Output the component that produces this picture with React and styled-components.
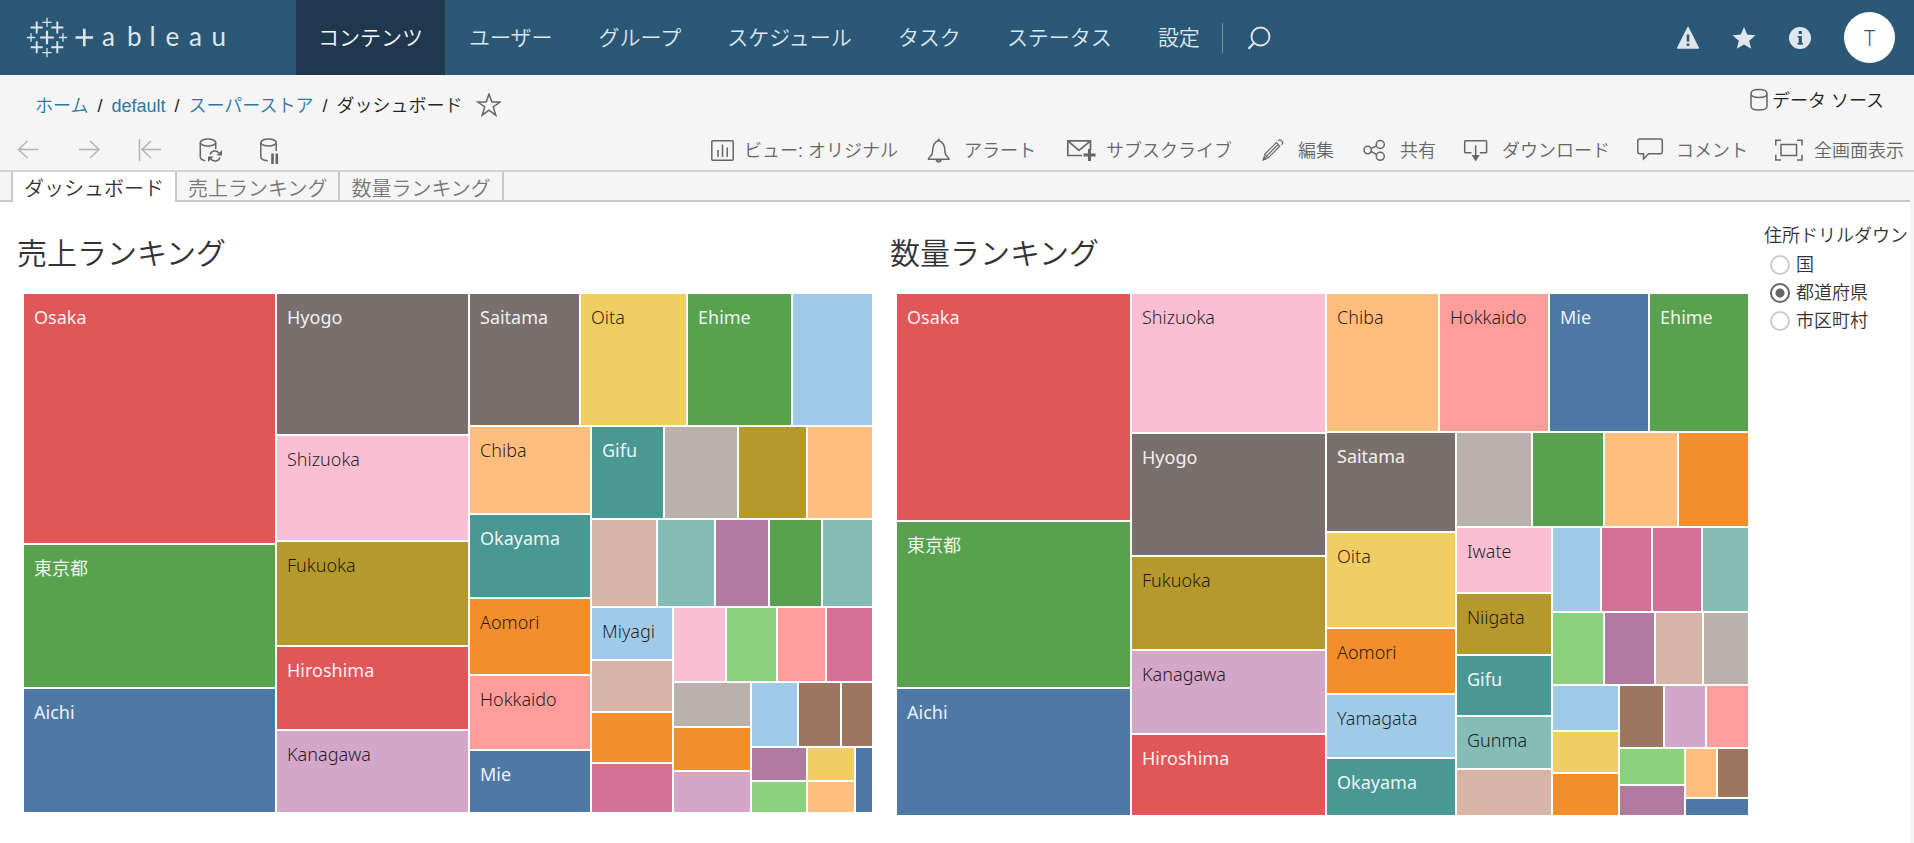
import React, { useState } from "react";
import styled, { createGlobalStyle } from "styled-components";

const GlobalStyle = createGlobalStyle`
  * {
    box-sizing: border-box;
  }
  body {
    margin: 0;
    background-color: #f5f5f5;
    color: #333;
    font-family: "Liberation Sans", "Noto Sans CJK JP", sans-serif;
    font-weight: 350;
    font-size: 18px;
    line-height: 24px;
  }
  a {
    text-decoration: none;
  }
  h2, p {
    margin: 0;
  }
`;

const Page = styled.div`
  display: flex;
  flex-direction: column;
  height: 100vh;
  min-height: 640px;
`;

/* ---------- header ---------- */

const Header = styled.header`
  display: flex;
  align-items: center;
  height: 75px;
  flex-shrink: 0;
  background-color: #2a5876;
  color: #dfe6ec;
`;
const LogoLink = styled.a`
  display: flex;
  width: 296px;
  padding-left: 24px;
  flex-shrink: 0;
`;
const MainNav = styled.nav`
  display: flex;
  align-self: stretch;
  gap: 2px;
`;
const NavLink = styled.a`
  display: flex;
  align-items: center;
  padding: 0 22px;
  font-size: 21px;
  white-space: nowrap;
  color: ${(props) => (props.$active ? "#fff" : "#dfe6ec")};
  background-color: ${(props) => (props.$active ? "#1f384e" : "transparent")};
`;
const Divider = styled.span`
  width: 1px;
  height: 30px;
  background-color: #6f8fa5;
`;
const IconButton = styled.button`
  display: flex;
  padding: 0;
  border: none;
  background: none;
  color: inherit;
  cursor: pointer;
`;
const SearchButton = styled(IconButton)`
  margin-left: 24px;
`;
const HeaderActions = styled.div`
  display: flex;
  align-items: center;
  gap: 32px;
  margin-left: auto;
  padding-right: 19px;
`;
const Avatar = styled.button`
  width: 51px;
  height: 51px;
  padding: 0;
  border: none;
  border-radius: 50%;
  background-color: #fff;
  color: #2a5876;
  font-family: "Noto Sans", sans-serif;
  font-weight: 300;
  font-size: 21px;
`;

/* ---------- breadcrumb and toolbar ---------- */

const CrumbRow = styled.div`
  display: flex;
  justify-content: space-between;
  align-items: center;
  height: 55px;
  flex-shrink: 0;
  padding: 6px 30px 0 35px;
`;
const Crumbs = styled.nav`
  display: flex;
  align-items: center;
  gap: 9px;
  color: #222;
  a {
    color: #2b7a9e;
  }
`;
const SourceLink = styled.a`
  display: flex;
  align-items: center;
  align-self: flex-start;
  gap: 4px;
  height: 40px;
  color: #222;
`;
const Toolbar = styled.div`
  display: flex;
  align-items: center;
  justify-content: space-between;
  height: 42px;
  flex-shrink: 0;
  padding: 0 10px 0 12px;
  border-bottom: 2px solid #d4d4d4;
`;
const History = styled.div`
  display: flex;
  gap: 29px;
  color: #666;
`;
const HistoryButton = styled(IconButton)`
  &:disabled {
    color: #b5b5b5;
  }
`;
const Actions = styled.div`
  display: flex;
  gap: 24px;
`;
const ActionButton = styled(IconButton)`
  align-items: center;
  gap: 10px;
  color: #666;
  font: inherit;
  white-space: nowrap;
`;
const ActionText = styled.span`
  padding-top: 2px;
`;

/* ---------- sheet tabs ---------- */

const TabBar = styled.nav`
  display: flex;
  height: 30px;
  flex-shrink: 0;
  margin-right: 4px;
  padding-left: 11px;
  box-shadow: inset 0 -2px #c8c8c8;
`;
const Tab = styled.a`
  display: flex;
  align-items: center;
  padding: 3px 11px 0;
  font-size: 20px;
  white-space: nowrap;
  color: ${(props) => (props.$active ? "#333" : "#777")};
  background-color: ${(props) => (props.$active ? "#fff" : "transparent")};
  border-right: 2px solid #c8c8c8;
  &:first-child {
    border-left: 2px solid #c8c8c8;
  }
`;

/* ---------- dashboard ---------- */

const Dashboard = styled.main`
  display: flex;
  flex: 1;
  min-height: 0;
  margin-right: 4px;
  padding-left: 17px;
  background-color: #fff;
`;
const Sheets = styled.div`
  display: flex;
  flex: 1;
  gap: 18px;
`;
const Sheet = styled.section`
  display: flex;
  flex-direction: column;
  flex: ${(props) => props.$grow} 1 0px;
  padding-bottom: ${(props) => props.$bottom}px;
`;
const SheetTitle = styled.h2`
  height: 92px;
  padding-top: 32px;
  font-size: 30px;
  font-weight: 350;
  line-height: 40px;
`;
const Treemap = styled.div`
  display: flex;
  flex: 1;
  min-height: 0;
  margin-left: 7px;
`;
const Group = styled.div`
  display: flex;
  flex-direction: ${(props) => props.$dir};
  flex: ${(props) => props.$size} 1 0px;
  min-width: 0;
  min-height: 0;
  gap: 2px;
`;
const Cell = styled.div`
  flex: ${(props) => props.$size} 1 0px;
  min-width: 0;
  min-height: 0;
  overflow: hidden;
  background-color: ${(props) => props.$color};
`;
const CellLabel = styled.span`
  display: block;
  padding: 11px 0 0 10px;
  font-family: "Noto Sans", "Noto Sans CJK JP", sans-serif;
  font-weight: ${(props) => (props.$light ? 400 : 300)};
  color: ${(props) => (props.$light ? "rgba(255, 255, 255, 0.92)" : "rgba(0, 0, 0, 0.85)")};
  white-space: nowrap;
`;
const Filter = styled.fieldset`
  width: 162px;
  flex-shrink: 0;
  margin: 0;
  padding: 22px 0 0 16px;
  border: none;
`;
const FilterTitle = styled.legend`
  float: left;
  width: 100%;
  padding: 0;
  margin-bottom: 3px;
  white-space: nowrap;
`;
const RadioLabel = styled.label`
  display: flex;
  align-items: center;
  clear: both;
  gap: 6px;
  height: 28px;
  padding-left: 6px;
`;
const Radio = styled.input`
  appearance: none;
  width: 20px;
  height: 20px;
  margin: 0;
  border: 2px solid #ccc;
  border-radius: 50%;
  &:checked {
    border-color: #666;
    background: radial-gradient(circle, #666 0 4px, transparent 5px);
  }
`;

const palette = {
  red: "#e15759",
  green: "#59a14f",
  blue: "#4e79a7",
  gray: "#79706e",
  silver: "#bab0ac",
  pink: "#fabfd2",
  olive: "#b6992d",
  mauve: "#d4a6c8",
  orange: "#f28e2b",
  peach: "#ffbe7d",
  yellow: "#f1ce63",
  teal: "#499894",
  aqua: "#86bcb6",
  salmon: "#ff9d9a",
  sky: "#a0cbe8",
  tan: "#d7b5a6",
  purple: "#b07aa1",
  lime: "#8cd17d",
  rose: "#d37295",
  brown: "#9d7660",
};
const lightLabelOn = ["red", "green", "blue", "gray", "teal"];

const row = (size, ...children) => ({ dir: "row", size, children });
const col = (size, ...children) => ({ dir: "column", size, children });
const cell = (size, color, name) => ({ size, color, name });

const salesTree = row(
  1,
  col(251, cell(249, "red", "Osaka"), cell(142, "green", "東京都"), cell(123, "blue", "Aichi")),
  col(
    191,
    cell(140, "gray", "Hyogo"),
    cell(104, "pink", "Shizuoka"),
    cell(103, "olive", "Fukuoka"),
    cell(82, "red", "Hiroshima"),
    cell(81, "mauve", "Kanagawa")
  ),
  col(
    402,
    row(
      131,
      cell(109, "gray", "Saitama"),
      cell(105, "yellow", "Oita"),
      cell(103, "green", "Ehime"),
      cell(79, "sky")
    ),
    row(
      385,
      col(
        120,
        cell(86, "peach", "Chiba"),
        cell(82, "teal", "Okayama"),
        cell(75, "orange", "Aomori"),
        cell(73, "salmon", "Hokkaido"),
        cell(61, "blue", "Mie")
      ),
      col(
        280,
        row(91, cell(71, "teal", "Gifu"), cell(72, "silver"), cell(67, "olive"), cell(64, "peach")),
        row(
          86,
          cell(64, "tan"),
          cell(56, "aqua"),
          cell(52, "purple"),
          cell(51, "green"),
          cell(49, "aqua")
        ),
        row(
          204,
          col(80, cell(51, "sky", "Miyagi"), cell(50, "tan"), cell(49, "orange"), cell(48, "rose")),
          col(
            198,
            row(73, cell(51, "pink"), cell(49, "lime"), cell(47, "salmon"), cell(45, "rose")),
            row(
              129,
              col(76, cell(43, "silver"), cell(42, "orange"), cell(40, "mauve")),
              col(
                120,
                row(63, cell(45, "sky"), cell(41, "brown"), cell(30, "brown")),
                row(
                  64,
                  col(54, cell(32, "purple"), cell(30, "lime")),
                  col(46, cell(32, "yellow"), cell(30, "peach")),
                  cell(16, "blue")
                )
              )
            )
          )
        )
      )
    )
  )
);

const quantityTree = row(
  1,
  col(233, cell(226, "red", "Osaka"), cell(165, "green", "東京都"), cell(126, "blue", "Aichi")),
  col(
    193,
    cell(138, "pink", "Shizuoka"),
    cell(121, "gray", "Hyogo"),
    cell(92, "olive", "Fukuoka"),
    cell(82, "mauve", "Kanagawa"),
    cell(80, "red", "Hiroshima")
  ),
  col(
    421,
    row(
      137,
      cell(111, "peach", "Chiba"),
      cell(108, "salmon", "Hokkaido"),
      cell(98, "blue", "Mie"),
      cell(98, "green", "Ehime")
    ),
    row(
      382,
      col(
        128,
        cell(98, "gray", "Saitama"),
        cell(94, "yellow", "Oita"),
        cell(64, "orange", "Aomori"),
        cell(62, "sky", "Yamagata"),
        cell(56, "teal", "Okayama")
      ),
      col(
        291,
        row(93, cell(74, "silver"), cell(70, "green"), cell(72, "peach"), cell(69, "orange")),
        row(
          287,
          col(
            94,
            cell(64, "pink", "Iwate"),
            cell(60, "olive", "Niigata"),
            cell(59, "teal", "Gifu"),
            cell(51, "aqua", "Gunma"),
            cell(45, "tan")
          ),
          col(
            195,
            row(83, cell(47, "sky"), cell(49, "rose"), cell(48, "rose"), cell(45, "aqua")),
            row(71, cell(50, "lime"), cell(49, "purple"), cell(46, "tan"), cell(44, "silver")),
            row(
              129,
              col(65, cell(44, "sky"), cell(40, "yellow"), cell(41, "orange")),
              col(
                128,
                row(61, cell(43, "brown"), cell(40, "mauve"), cell(41, "salmon")),
                row(
                  66,
                  col(64, cell(35, "lime"), cell(29, "purple")),
                  col(62, row(48, cell(30, "peach"), cell(30, "brown")), cell(16, "blue"))
                )
              )
            )
          )
        )
      )
    )
  )
);

const TreeNode = ({ node }) => {
  if (node.children) {
    return (
      <Group $dir={node.dir} $size={node.size}>
        {node.children.map((child, i) => (
          <TreeNode key={i} node={child} />
        ))}
      </Group>
    );
  }
  return (
    <Cell $size={node.size} $color={palette[node.color]}>
      {node.name && <CellLabel $light={lightLabelOn.includes(node.color)}>{node.name}</CellLabel>}
    </Cell>
  );
};

/* ---------- icons ---------- */

const Icon = ({ width = 32, height = 28, children }) => (
  <svg
    width={width}
    height={height}
    viewBox={`0 0 ${width} ${height}`}
    fill="none"
    stroke="currentColor"
    strokeWidth="1.5"
    aria-hidden="true"
  >
    {children}
  </svg>
);

const plus = (x, y, r) => `M${x - r} ${y}H${x + r}M${x} ${y - r}V${y + r}`;

const Logo = () => (
  <svg width="210" height="48" viewBox="0 0 210 48" role="img" aria-label="Tableau">
    <g fill="none" stroke="#dfe6ec">
      <path strokeWidth="2.2" d={plus(23, 23.5, 6.8)} />
      <path
        strokeWidth="1.9"
        d={plus(12.7, 13.5, 6) + plus(33.3, 13.5, 6) + plus(12.7, 33.2, 6) + plus(33.3, 33.2, 6)}
      />
      <path
        strokeWidth="1.3"
        d={plus(23, 8.4, 4.6) + plus(7, 23.5, 4.2) + plus(39, 23.5, 4.2) + plus(23, 38.6, 4.6)}
      />
      <path strokeWidth="2.6" d={plus(60.3, 23.5, 8.8)} />
    </g>
    <text
      x="78 103 125.5 141.5 165 187.5"
      y="32"
      fill="#dfe6ec"
      fontFamily="Lato, sans-serif"
      fontWeight="400"
      fontSize="26"
    >
      ableau
    </text>
  </svg>
);

const icons = {
  back: <path d="M26.5 13.5H6.5M15.5 5l-9 8.5 9 8.5" />,
  forward: <path d="M6 13.5H26M17 5l9 8.5-9 8.5" />,
  reset: <path d="M5.5 3V25M27 13.5H8M17 5l-9 8.5 9 8.5" />,
  refresh: (
    <>
      <ellipse cx="13" cy="6.5" rx="7.7" ry="3.6" />
      <path d="M5.3 6.5V21c0 2 2 3.2 5 3.7M20.7 6.5V13" />
      <path d="M15 18.5a5.2 5.2 0 0 1 9-1.5M25 21.5a5.2 5.2 0 0 1-9 1.5" />
      <path d="M27 14v5.5h-5.500zM13 26v-5.5h5.500z" fill="currentColor" stroke="none" />
    </>
  ),
  pause: (
    <>
      <ellipse cx="12.5" cy="6.5" rx="7.7" ry="3.6" />
      <path d="M4.8 6.5V21c0 2 2 3.2 7 3.7M20.2 6.5V15" />
      <path d="M16.5 17.5V28M20.8 17.5V28" strokeWidth="2.6" />
    </>
  ),
  view: (
    <>
      <rect x="9.8" y="4.8" width="21.4" height="19.4" rx="1" />
      <path d="M16 14v7M20.5 8.500V21M25.2 11.500V21" />
    </>
  ),
  alert: (
    <>
      <path d="M6.5 23.3h20.500c0-2.500-4-2.800-4-7.300 0-6-1.500-10-6.300-11.500-4.700 1.500-6.200 5.500-6.200 11.500 0 4.500-4 4.800-4 7.300z" />
      <path d="M16.7 4.5V2.8M14.5 24c.4 2.2 4 2.2 4.400 0" strokeWidth="2" />
    </>
  ),
  subscribe: (
    <>
      <path d="M22 19.5H7.8V4.8h22.700V14M7.8 4.8L19 14.5 30.5 4.8" strokeWidth="1.7" />
      <path d={plus(29.5, 19, 6)} strokeWidth="3" />
    </>
  ),
  edit: (
    <>
      <path
        d="M8.5 18.5L20.3 6.7l3.500 3.500L12 22zM22 5.2l1-1c.6-.5 1.200-.5 1.800 0l1.600 1.600c.5.6.5 1.2 0 1.800l-1 1M10.8 19.8L22 8.6"
        strokeWidth="1.2"
      />
      <path d="M8 19.5L6 25l5.500-2z" fill="currentColor" stroke="none" />
    </>
  ),
  share: (
    <>
      <circle cx="9.7" cy="14" r="3.7" />
      <circle cx="22.3" cy="8.5" r="4" />
      <circle cx="22.3" cy="20.3" r="4" />
      <path d="M13.2 12.4l5.400-2.400M13.2 15.6l5.400 3" />
    </>
  ),
  download: (
    <>
      <path d="M11.5 16.8H5.5c-.5 0-.8-.3-.8-.8V5.5c0-.5.3-.8.8-.8h20.300c.5 0 .8.3.8.8V16c0 .5-.3.8-.8.8h-6M15.7 9.5V21" />
      <path d="M11.7 19h8l-4 6.500z" fill="currentColor" stroke="none" />
    </>
  ),
  comment: (
    <path d="M5.8 3h20.500c1.200 0 2 .8 2 2v10.800c0 1.200-.8 2-2 2H14.5L9.5 23v-5.200H5.8c-1.200 0-2-.8-2-2V5c0-1.200.8-2 2-2z" />
  ),
  fullscreen: (
    <path d="M9 8.5h15.500v11H9zM9 4.3H3.8v5.200M25 4.3h5v5.200M9 24H3.8v-5.200M25 24h5v-5.200" />
  ),
};

const history = [
  { icon: "back", label: "元に戻す", disabled: true },
  { icon: "forward", label: "やり直し", disabled: true },
  { icon: "reset", label: "最初に戻す", disabled: true },
  { icon: "refresh", label: "更新" },
  { icon: "pause", label: "一時停止" },
];

const actions = [
  { icon: "view", label: "ビュー: オリジナル" },
  { icon: "alert", label: "アラート" },
  { icon: "subscribe", label: "サブスクライブ", width: 36 },
  { icon: "edit", label: "編集" },
  { icon: "share", label: "共有" },
  { icon: "download", label: "ダウンロード" },
  { icon: "comment", label: "コメント" },
  { icon: "fullscreen", label: "全画面表示" },
];

const navItems = [
  "コンテンツ",
  "ユーザー",
  "グループ",
  "スケジュール",
  "タスク",
  "ステータス",
  "設定",
];
const tabs = ["ダッシュボード", "売上ランキング", "数量ランキング"];
const levels = ["国", "都道府県", "市区町村"];

const App = () => {
  const [level, setLevel] = useState("都道府県");

  return (
    <>
      <GlobalStyle />
      <Page>
        <Header>
          <LogoLink href="#">
            <Logo />
          </LogoLink>
          <MainNav>
            {navItems.map((item, i) => (
              <NavLink key={item} href="#" $active={i === 0}>
                {item}
              </NavLink>
            ))}
          </MainNav>
          <Divider />
          <SearchButton aria-label="検索">
            <Icon width={24} height={24}>
              <circle cx="13.5" cy="10.5" r="9" strokeWidth="1.9" />
              <path d="M7 17L1.5 22.7" strokeWidth="2.2" />
            </Icon>
          </SearchButton>
          <HeaderActions>
            <IconButton aria-label="アラート">
              <Icon width={24} height={24}>
                <path
                  d="M12 1.5L22.3 22H1.7z"
                  fill="currentColor"
                  strokeWidth="1.5"
                  strokeLinejoin="round"
                />
                <path d="M12 8.5v7M12 17.5v2.6" stroke="#2a5876" strokeWidth="2.6" />
              </Icon>
            </IconButton>
            <IconButton aria-label="お気に入り">
              <Icon width={24} height={24}>
                <path
                  d="M12 1l3.200 7.600 8.300.7-6.300 5.400 1.900 8.100L12 18.5l-7.100 4.300 1.900-8.100L.5 9.3l8.300-.7z"
                  fill="currentColor"
                  stroke="none"
                />
              </Icon>
            </IconButton>
            <IconButton aria-label="情報">
              <Icon width={24} height={24}>
                <circle cx="12" cy="12" r="11" fill="currentColor" stroke="none" />
                <path d="M12.3 5v3M12.3 10v8.500" stroke="#2a5876" strokeWidth="3.2" />
                <path d="M9.5 10.7h2M9.5 17.8h5.500" stroke="#2a5876" />
              </Icon>
            </IconButton>
            <Avatar>T</Avatar>
          </HeaderActions>
        </Header>

        <CrumbRow>
          <Crumbs>
            <a href="#">ホーム</a>
            <span>/</span>
            <a href="#">default</a>
            <span>/</span>
            <a href="#">スーパーストア</a>
            <span>/</span>
            <span>ダッシュボード</span>
            <IconButton aria-label="お気に入りに追加">
              <Icon width={30} height={26}>
                <path
                  d="M18 1l2.800 8h8.200l-6.700 5 2.500 8.200-6.800-5-6.800 5L13.7 14 7 9h8.200z"
                  stroke="#666"
                />
              </Icon>
            </IconButton>
          </Crumbs>
          <SourceLink href="#">
            <Icon width={18} height={26}>
              <path
                d="M1 5.5C1 3 4.500 1.5 9 1.5S17 3 17 5.5V18c0 2.500-3.500 4-8 4s-8-1.500-8-4zM1 5.5C1 8 4.500 9.5 9 9.5s8-1.500 8-4"
                stroke="#666"
              />
            </Icon>
            データ ソース
          </SourceLink>
        </CrumbRow>

        <Toolbar>
          <History>
            {history.map((item) => (
              <HistoryButton key={item.icon} aria-label={item.label} disabled={item.disabled}>
                <Icon>{icons[item.icon]}</Icon>
              </HistoryButton>
            ))}
          </History>
          <Actions>
            {actions.map((item) => (
              <ActionButton key={item.icon}>
                <Icon width={item.width}>{icons[item.icon]}</Icon>
                <ActionText>{item.label}</ActionText>
              </ActionButton>
            ))}
          </Actions>
        </Toolbar>

        <TabBar>
          {tabs.map((tab, i) => (
            <Tab key={tab} href="#" $active={i === 0}>
              {tab}
            </Tab>
          ))}
        </TabBar>

        <Dashboard>
          <Sheets>
            <Sheet $grow={855} $bottom={31}>
              <SheetTitle>売上ランキング</SheetTitle>
              <Treemap>
                <TreeNode node={salesTree} />
              </Treemap>
            </Sheet>
            <Sheet $grow={858} $bottom={28}>
              <SheetTitle>数量ランキング</SheetTitle>
              <Treemap>
                <TreeNode node={quantityTree} />
              </Treemap>
            </Sheet>
          </Sheets>
          <Filter>
            <FilterTitle>住所ドリルダウン</FilterTitle>
            {levels.map((item) => (
              <RadioLabel key={item}>
                <Radio
                  type="radio"
                  name="level"
                  checked={level === item}
                  onChange={() => setLevel(item)}
                />
                {item}
              </RadioLabel>
            ))}
          </Filter>
        </Dashboard>
      </Page>
    </>
  );
};

export default App;
